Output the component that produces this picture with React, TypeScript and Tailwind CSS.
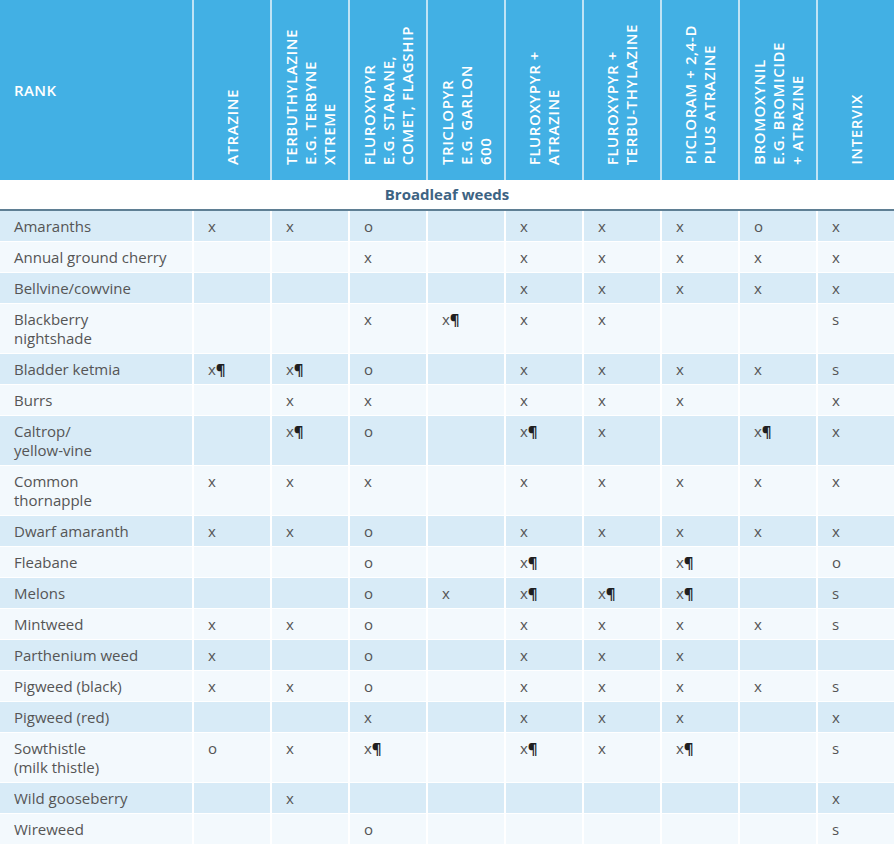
const heads = [
  ['ATRAZINE'],
  ['TERBUTHYLAZINE', 'E.G. TERBYNE', 'XTREME'],
  ['FLUROXYPYR', 'E.G. STARANE,', 'COMET, FLAGSHIP'],
  ['TRICLOPYR', 'E.G. GARLON', '600'],
  ['FLUROXYPYR +', 'ATRAZINE'],
  ['FLUROXYPYR +', 'TERBU-THYLAZINE'],
  ['PICLORAM + 2,4-D', 'PLUS ATRAZINE'],
  ['BROMOXYNIL', 'E.G. BROMICIDE', '+ ATRAZINE'],
  ['INTERVIX'],
];

const rows: { name: string[]; v: string[] }[] = [
  { name: ['Amaranths'], v: ['x', 'x', 'o', '', 'x', 'x', 'x', 'o', 'x'] },
  { name: ['Annual ground cherry'], v: ['', '', 'x', '', 'x', 'x', 'x', 'x', 'x'] },
  { name: ['Bellvine/cowvine'], v: ['', '', '', '', 'x', 'x', 'x', 'x', 'x'] },
  { name: ['Blackberry', 'nightshade'], v: ['', '', 'x', 'x¶', 'x', 'x', '', '', 's'] },
  { name: ['Bladder ketmia'], v: ['x¶', 'x¶', 'o', '', 'x', 'x', 'x', 'x', 's'] },
  { name: ['Burrs'], v: ['', 'x', 'x', '', 'x', 'x', 'x', '', 'x'] },
  { name: ['Caltrop/', 'yellow-vine'], v: ['', 'x¶', 'o', '', 'x¶', 'x', '', 'x¶', 'x'] },
  { name: ['Common', 'thornapple'], v: ['x', 'x', 'x', '', 'x', 'x', 'x', 'x', 'x'] },
  { name: ['Dwarf amaranth'], v: ['x', 'x', 'o', '', 'x', 'x', 'x', 'x', 'x'] },
  { name: ['Fleabane'], v: ['', '', 'o', '', 'x¶', '', 'x¶', '', 'o'] },
  { name: ['Melons'], v: ['', '', 'o', 'x', 'x¶', 'x¶', 'x¶', '', 's'] },
  { name: ['Mintweed'], v: ['x', 'x', 'o', '', 'x', 'x', 'x', 'x', 's'] },
  { name: ['Parthenium weed'], v: ['x', '', 'o', '', 'x', 'x', 'x', '', ''] },
  { name: ['Pigweed (black)'], v: ['x', 'x', 'o', '', 'x', 'x', 'x', 'x', 's'] },
  { name: ['Pigweed (red)'], v: ['', '', 'x', '', 'x', 'x', 'x', '', 'x'] },
  { name: ['Sowthistle', '(milk thistle)'], v: ['o', 'x', 'x¶', '', 'x¶', 'x', 'x¶', '', 's'] },
  { name: ['Wild gooseberry'], v: ['', 'x', '', '', '', '', '', '', 'x'] },
  { name: ['Wireweed'], v: ['', '', 'o', '', '', '', '', '', 's'] },
];

const cols = 'grid grid-cols-[194px_repeat(8,78px)_76px]';

function Mark({ v }: { v: string }) {
  if (v.endsWith('¶')) {
    return (
      <>
        {v.slice(0, -1)}
        <span className="font-bold text-[#1f1f1f]">¶</span>
      </>
    );
  }
  return <>{v}</>;
}

export default function App() {
  return (
    <div className="w-[894px] h-[848px] overflow-hidden bg-white font-['Open_Sans',sans-serif]">
      {/* header */}
      <div className={`${cols} h-[180px] bg-[#42b0e4] text-white`}>
        <div className="flex items-center pl-[14px] border-r-2 border-[#bfe3f5] text-[15px] font-semibold tracking-[0.4px]">RANK</div>
        {heads.map((h, i) => (
          <div
            key={i}
            className={`flex items-end justify-center pb-[15px] ${i < heads.length - 1 ? 'border-r-2 border-[#bfe3f5]' : ''}`}
          >
            <div className="[writing-mode:vertical-rl] rotate-180 whitespace-nowrap text-[15px] leading-[19px] font-semibold tracking-[0.6px]">
              {h.map((l, j) => (
                <div key={j}>{l}</div>
              ))}
            </div>
          </div>
        ))}
      </div>

      {/* section */}
      <div className="h-[31px] border-b-2 border-[#5f7f94] flex items-center justify-center text-[15px] font-bold text-[#3d6383]">
        Broadleaf weeds
      </div>

      {rows.map((r, i) => (
        <div
          key={i}
          className={`${cols} border-b border-white text-[15px] leading-[19px] text-[#555] ${i % 2 === 0 ? 'bg-[#d8ebf7]' : 'bg-[#f3f9fd]'}`}
        >
          <div className="pl-[14px] pt-[6px] pb-[5px] border-r-2 border-white">
            {r.name.map((n, j) => (
              <div key={j}>{n}</div>
            ))}
          </div>
          {r.v.map((v, j) => (
            <div
              key={j}
              className={`pl-[14px] pt-[6px] pb-[5px] ${j < r.v.length - 1 ? 'border-r-2 border-white' : ''}`}
            >
              <Mark v={v} />
            </div>
          ))}
        </div>
      ))}
    </div>
  );
}
